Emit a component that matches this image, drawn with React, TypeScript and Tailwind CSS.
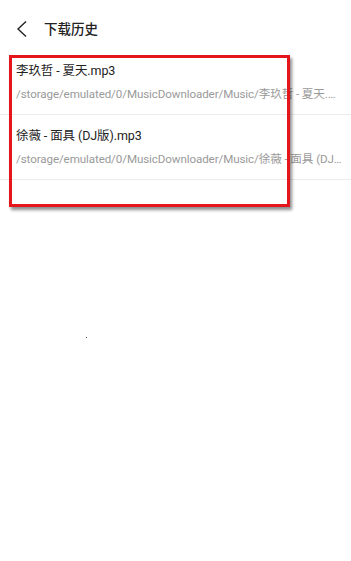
import React from 'react'

const items = [
  {
    name: '李玖哲 - 夏天.mp3',
    path: '/storage/emulated/0/MusicDownloader/Music/李玖哲 - 夏天.mp3',
  },
  {
    name: '徐薇 - 面具 (DJ版).mp3',
    path: '/storage/emulated/0/MusicDownloader/Music/徐薇 - 面具 (DJ版).mp3',
  },
]

export default function App() {
  return (
    <div
      className="relative w-[351px] h-[561px] bg-white overflow-hidden text-[#222]"
      style={{ fontFamily: 'Roboto, "Noto Sans CJK SC", sans-serif' }}
    >
      {/* header */}
      <div className="h-[50px] pt-2 flex items-center">
        <div className="w-[44px] flex items-center pl-[16px]">
          <svg width="12" height="18" viewBox="0 0 12 18" fill="none">
            <path d="M10 1.5 L2 9 L10 16.5" stroke="#222" strokeWidth="1.4" />
          </svg>
        </div>
        <span className="text-[13.5px] font-medium leading-5">下载历史</span>
      </div>

      {/* list */}
      <div>
        {items.map((it) => (
          <div key={it.name} className="border-b border-[#ececec] pl-4 pr-2 pt-[11px] pb-[11px] flex flex-col gap-1">
            <div className="text-[12.5px] leading-5 tracking-[-0.1px]">{it.name}</div>
            <div className="text-[11.6px] leading-[18px] text-[#9a9a9a] truncate tracking-[-0.1px]">{it.path}</div>
          </div>
        ))}
      </div>

      {/* stray dot */}
      <div className="absolute left-[86px] top-[337px] w-px h-px bg-[#555]" />

      {/* red annotation box */}
      <div className="absolute left-[9px] top-[55px] w-[281px] h-[152px] border-[3px] border-[#e4151b] shadow-[2px_3px_3px_rgba(0,0,0,0.45)]" />
    </div>
  )
}
